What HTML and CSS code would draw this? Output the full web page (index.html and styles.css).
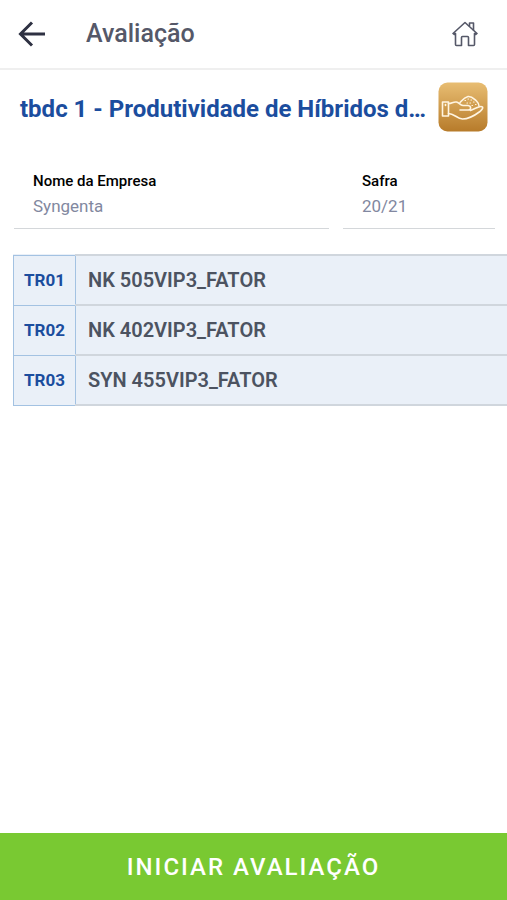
FILE: index.html
```html
<!DOCTYPE html>
<html lang="pt-BR">
<head>
	<meta charset="UTF-8">
	<meta name="viewport" content="width=device-width, initial-scale=1">
	<title>Avaliação</title>
	<link rel="stylesheet" href="styles.css">
</head>

<body>
	<header class="topbar">
		<a class="back" href="#" aria-label="Voltar">
			<svg width="28" height="26" viewBox="0 0 28 26" fill="none" stroke="#2e3142" stroke-width="3">
				<path d="M27 13H3M14 1.500L2.500 13L14 24.500" />
			</svg>
		</a>
		<h1>Avaliação</h1>
		<a class="home" href="#" aria-label="Início">
			<svg width="26" height="26" viewBox="0 0 26 26" fill="none" stroke="#555868" stroke-width="1.600" stroke-linejoin="round" stroke-linecap="round">
				<path d="M1 12.500L13 1.500L25 12.500L23.800 13.500L22.500 12.500V23.500Q22.500 24.500 21.500 24.500H16.500V16.500Q16.500 15.500 15.500 15.500H10.500Q9.500 15.500 9.500 16.500V24.500H4.500Q3.500 24.500 3.500 23.500V12.500L2.200 13.500Z" />
				<path d="M17.500 5V2H21.500V9" />
			</svg>
		</a>
	</header>

	<main>
		<div class="title">
			<h2>tbdc 1 - Produtividade de Híbridos d…</h2>
			<svg class="badge" width="50" height="50" viewBox="0 0 50 50" fill="none" stroke="#fff5e2" stroke-width="1.600" stroke-linejoin="round" stroke-linecap="round">
				<defs>
					<linearGradient id="gold" x1="0" y1="0" x2="0" y2="1">
						<stop offset="0" stop-color="#e8bd72" />
						<stop offset="1" stop-color="#b77b2a" />
					</linearGradient>
				</defs>
				<rect x="0.500" y="0.500" width="49" height="49" rx="9" fill="url(#gold)" stroke="none" />
				<rect x="4.500" y="20" width="6" height="14" />
				<path d="M7.500 22.500V23.500" />
				<path d="M10.500 21.500C14 21.500 15 19.500 18.500 20C21 20.500 22 23 25 23.500H30C33.500 24 33.500 28 30 28H22" />
				<path d="M10.500 31.500C16 31.500 19 36.500 24.500 37C30 37 38 32.500 42 29.500C43.500 28 45.500 26.500 44.500 25C43 23.500 40 25 38 26L32.500 28.500" />
				<path d="M22 20.500C24 18.500 26 15.500 30 14.500C34 14 36 17 38.500 19C40 20.500 41 22 41 24" />
				<path d="M27 18.500H27.500M30 17H30.500M33 18H33.500M29 21H29.500M32 21H32.500M35.500 20H36M34 23.500H34.500M37.500 22.500H38" stroke-width="1.200" />
			</svg>
		</div>

		<dl class="info">
			<div class="field">
				<dt>Nome da Empresa</dt>
				<dd>Syngenta</dd>
			</div>
			<div class="field">
				<dt>Safra</dt>
				<dd>20/21</dd>
			</div>
		</dl>

		<table class="tratamentos">
			<tbody>
				<tr>
					<th scope="row">TR01</th>
					<td>NK 505VIP3_FATOR</td>
				</tr>
				<tr>
					<th scope="row">TR02</th>
					<td>NK 402VIP3_FATOR</td>
				</tr>
				<tr>
					<th scope="row">TR03</th>
					<td>SYN 455VIP3_FATOR</td>
				</tr>
			</tbody>
		</table>
	</main>

	<button class="start" type="button">INICIAR AVALIAÇÃO</button>
</body>

</html>
```

FILE: styles.css
```css
* {
	box-sizing: border-box;
}
body {
	margin: 0;
	min-height: 100vh;
	display: flex;
	flex-direction: column;
	background: #fff;
	font-family: Roboto, "Liberation Sans", sans-serif;
}
h1, h2, dl, dd {
	margin: 0;
}
svg {
	display: block;
}

/*barra superior*/
.topbar {
	display: flex;
	align-items: center;
	height: 70px;
	padding: 0 29px 0 18px;
	border-bottom: 2px solid #efefef;
}
.topbar h1 {
	flex: 1;
	margin-left: 40px;
	font-size: 25px;
	font-weight: 500;
	line-height: 28px;
	color: #555868;
}

main {
	flex: 1;
}

/*título do ensaio*/
.title {
	display: flex;
	align-items: center;
	padding: 12px 19px 0 20px;
}
.title h2 {
	flex: 1;
	padding-top: 4px;
	font-size: 24px;
	font-weight: 700;
	line-height: 32px;
	color: #1b4d9e;
}
.badge {
	flex: none;
}

/*dados do ensaio*/
.info {
	display: grid;
	grid-template-columns: 315fr 152fr;
	gap: 14px;
	padding: 40px 12px 0 14px;
}
.field {
	padding: 0 19px 10px;
	border-bottom: 1px solid #d4d7da;
}
.field dt {
	font-size: 15px;
	font-weight: 500;
	line-height: 18px;
	color: #000;
}
.field dd {
	margin-top: 4px;
	font-size: 17px;
	line-height: 24px;
	color: #8288a0;
}

/*lista de tratamentos*/
.tratamentos {
	width: calc(100% - 13px);
	margin: 25px 0 0 13px;
	border-collapse: collapse;
	background: #eaf0f8;
}
.tratamentos th,
.tratamentos td {
	height: 50px;
	padding: 0;
}
.tratamentos th {
	width: 62px;
	border: 1px solid #a3c2e2;
	font-size: 17px;
	font-weight: 700;
	color: #1b4d9e;
}
.tratamentos td {
	padding-left: 12px;
	border-top: 2px solid #d0d6dd;
	border-bottom: 2px solid #d0d6dd;
	font-size: 20px;
	font-weight: 600;
	color: #4c5361;
}

.start {
	height: 67px;
	border: 0;
	background: #79c932;
	color: #fff;
	font-family: inherit;
	font-size: 24px;
	font-weight: 500;
	letter-spacing: 2px;
	cursor: pointer;
}
```
